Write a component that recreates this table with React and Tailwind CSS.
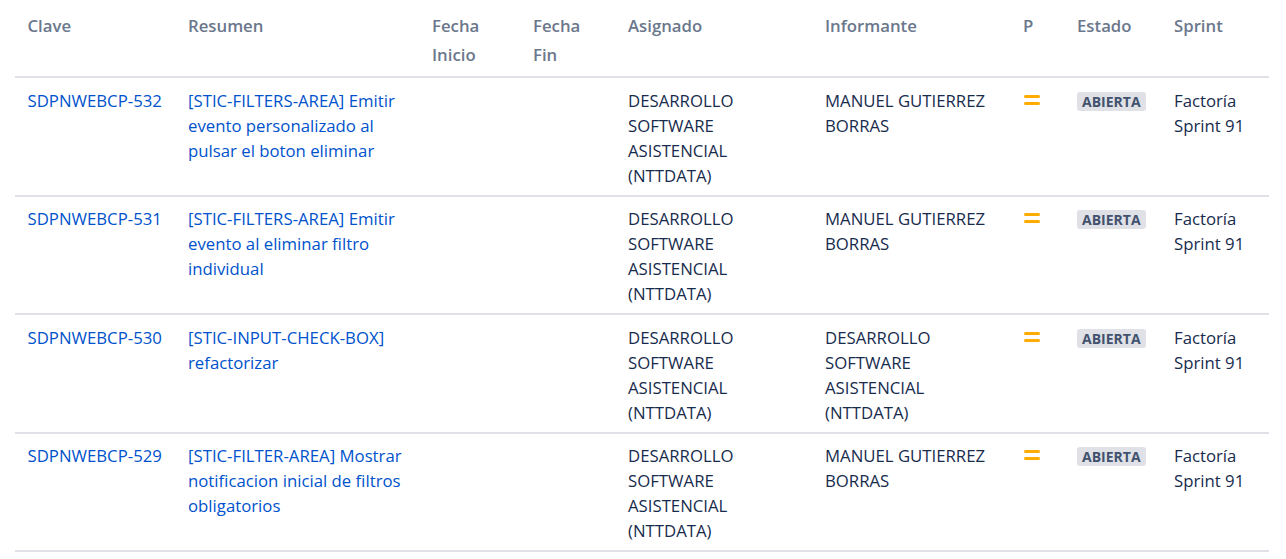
import React from 'react';

const rows = [
    {
        key: 'SDPNWEBCP-532',
        summary: '[STIC-FILTERS-AREA] Emitir evento personalizado al pulsar el boton eliminar',
        assignee: 'DESARROLLO SOFTWARE ASISTENCIAL (NTTDATA)',
        reporter: 'MANUEL GUTIERREZ BORRAS',
    },
    {
        key: 'SDPNWEBCP-531',
        summary: '[STIC-FILTERS-AREA] Emitir evento al eliminar filtro individual',
        assignee: 'DESARROLLO SOFTWARE ASISTENCIAL (NTTDATA)',
        reporter: 'MANUEL GUTIERREZ BORRAS',
    },
    {
        key: 'SDPNWEBCP-530',
        summary: '[STIC-INPUT-CHECK-BOX] refactorizar',
        assignee: 'DESARROLLO SOFTWARE ASISTENCIAL (NTTDATA)',
        reporter: 'DESARROLLO SOFTWARE ASISTENCIAL (NTTDATA)',
    },
    {
        key: 'SDPNWEBCP-529',
        summary: '[STIC-FILTER-AREA] Mostrar notificacion inicial de filtros obligatorios',
        assignee: 'DESARROLLO SOFTWARE ASISTENCIAL (NTTDATA)',
        reporter: 'MANUEL GUTIERREZ BORRAS',
    },
];

const headers = ['Clave', 'Resumen', 'Fecha Inicio', 'Fecha Fin', 'Asignado', 'Informante', 'P', 'Estado', 'Sprint'];

// icono de prioridad media (dos barras)
const MediumPriority = () => (
    <svg width="18" height="16" viewBox="0 0 18 16" className="mt-[4px]">
        <rect x="1" y="3" width="16" height="3" rx="1.5" fill="#ffab00" />
        <rect x="1" y="10" width="16" height="3" rx="1.5" fill="#ffab00" />
    </svg>
);

const App = () => {
    const cell = 'px-[12.5px] pt-[9.5px] pb-[7px]';

    return (
        <div className="bg-white min-h-screen px-[15px] pt-[11px] font-['Open_Sans',sans-serif] text-[16.75px] leading-[25px] text-[#172b4d]">
            <table className="w-[1254px] table-fixed border-collapse">
                <colgroup>
                    <col className="w-[160.5px]" />
                    <col className="w-[244px]" />
                    <col className="w-[101px]" />
                    <col className="w-[95px]" />
                    <col className="w-[197px]" />
                    <col className="w-[198px]" />
                    <col className="w-[54px]" />
                    <col className="w-[97px]" />
                    <col className="w-[107.5px]" />
                </colgroup>
                <thead>
                    <tr className="border-b-2 border-[#dfe1e6]">
                        {headers.map((h) => (
                            <th
                                key={h}
                                className="text-left align-top font-semibold leading-[29px] text-[#6b778c] px-[12.5px] pb-[7px] pt-0"
                            >
                                {h}
                            </th>
                        ))}
                    </tr>
                </thead>
                <tbody>
                    {rows.map((row) => (
                        <tr key={row.key} className="border-b-2 border-[#dfe1e6] align-top">
                            <td className={`${cell} text-[#0052cc]`}>{row.key}</td>
                            <td className={`${cell} text-[#0052cc]`}>{row.summary}</td>
                            <td className={cell}></td>
                            <td className={cell}></td>
                            <td className={cell}>{row.assignee}</td>
                            <td className={cell}>{row.reporter}</td>
                            <td className={cell}>
                                <MediumPriority />
                            </td>
                            <td className={cell}>
                                <span className="inline-block mt-[4px] rounded-[3px] bg-[#dfe1e6] px-[5px] text-[14px] leading-[19px] font-bold uppercase text-[#42526e]">
                                    Abierta
                                </span>
                            </td>
                            <td className={cell}>Factoría Sprint 91</td>
                        </tr>
                    ))}
                </tbody>
            </table>
        </div>
    );
};

export default App;
